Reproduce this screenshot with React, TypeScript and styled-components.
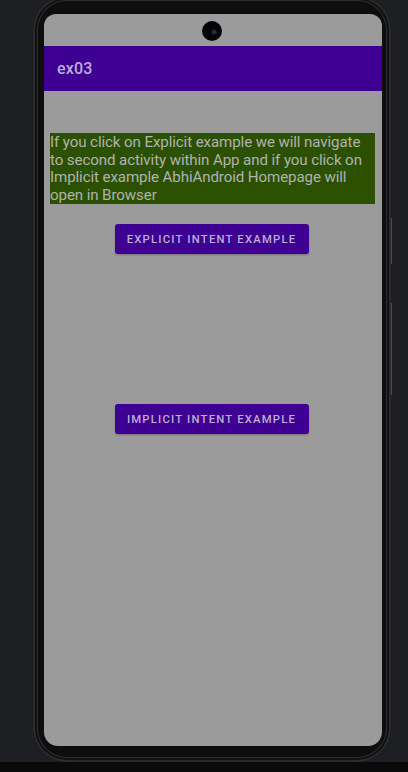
import React from 'react'
import styled, { createGlobalStyle } from 'styled-components'

const colors = {
  desk: '#1e1f22',
  frame: '#0e0e0f',
  screen: '#9b9b9b',
  primary: '#3e0092',
  note: '#2b5100',
  noteText: '#b1b1b1',
  barText: '#bcaed6'
}

const GlobalStyle = createGlobalStyle`
  html, body {
    margin: 0;
    padding: 0;
    background: ${colors.desk};
  }
  body {
    font-family: Roboto, "Liberation Sans", sans-serif;
  }
`

const Page = styled.div`
width: 408px;
height: 772px;
display: flex;
flex-direction: column;
overflow: hidden;
background: ${colors.desk};
`

const Stage = styled.div`
flex: 1;
display: flex;
align-items: flex-end;
padding-left: 33px;
overflow: hidden;
`

const Phone = styled.div`
position: relative;
width: 358px;
height: 766px;
box-sizing: border-box;
padding: 18px 9px 16px 11px;
border-radius: 34px;
background: ${colors.frame};
box-shadow: inset 0 0 0 2px #2a2b2d, inset 0 0 0 4px #121213, inset 0 0 0 5px #2c2d2f;
display: flex;
`

const SideKey = styled.div<{ top: number; length: number }>`
position: absolute;
right: -1px;
top: ${p => p.top}px;
width: 1px;
height: ${p => p.length}px;
background: #4a4b4e;
`

const BottomBar = styled.div`
height: 10px;
background: #0a0a0a;
`

const Screen = styled.div`
flex: 1;
display: flex;
flex-direction: column;
background: ${colors.screen};
border-radius: 12px 12px 14px 14px;
overflow: hidden;
`

const StatusArea = styled.div`
height: 32px;
display: flex;
align-items: center;
justify-content: center;
`

const Camera = styled.div`
width: 20px;
height: 20px;
margin-left: -2px;
margin-top: 1px;
border-radius: 50%;
background: radial-gradient(circle at 60% 55%, #1b2a44 0 2px, #050507 3px);
`

const AppBar = styled.div`
height: 45px;
display: flex;
align-items: center;
padding-left: 13px;
background: ${colors.primary};
color: ${colors.barText};
font-size: 16px;
font-weight: 500;
letter-spacing: 0.2px;
`

const Content = styled.div`
display: flex;
flex-direction: column;
align-items: center;
padding: 42px 7px 0 6px;
`

const Note = styled.p`
align-self: stretch;
margin: 0;
padding: 1px 0 0 0;
background: ${colors.note};
color: ${colors.noteText};
font-size: 15.1px;
line-height: 17.5px;
letter-spacing: -0.1px;
`

const Button = styled.button<{ gap: number }>`
margin-top: ${p => p.gap}px;
margin-left: -2px;
width: 194px;
height: 30px;
border: 0;
border-radius: 3px;
background: ${colors.primary};
color: ${colors.barText};
font-family: Roboto, "Liberation Sans", sans-serif;
font-size: 11.3px;
font-weight: 500;
letter-spacing: 1.2px;
text-transform: uppercase;
box-shadow: 0 1px 2px rgba(0, 0, 0, 0.25);
cursor: pointer;
`

const App = () => {
  return (
    <Page>
      <GlobalStyle />
      <Stage>
        <Phone>
          <SideKey top={222} length={46} />
          <SideKey top={307} length={92} />
          <Screen>
            <StatusArea>
              <Camera />
            </StatusArea>
            <AppBar>ex03</AppBar>
            <Content>
              <Note>
                If you click on Explicit example we will navigate to second activity within App and if you click on Implicit example AbhiAndroid Homepage will open in Browser
              </Note>
              <Button gap={20}>Explicit Intent Example</Button>
              <Button gap={150}>Implicit Intent Example</Button>
            </Content>
          </Screen>
        </Phone>
      </Stage>
      <BottomBar />
    </Page>
  )
}

export default App
